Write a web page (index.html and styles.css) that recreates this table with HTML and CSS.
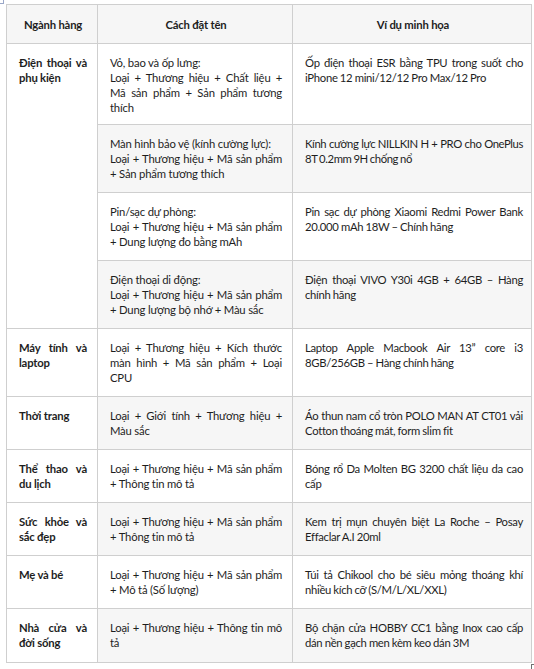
FILE: index.html
```html
<!DOCTYPE html>
<html lang="vi">
<head>
<meta charset="utf-8">
<link rel="stylesheet" href="styles.css">
</head>
<body>
<span class="mark-tl"></span>
<div class="wrap">
<table class="tbl">
<colgroup><col class="c1"><col class="c2"><col class="c3"></colgroup>
<thead>
<tr class="alt"><th>Ngành hàng</th><th>Cách đặt tên</th><th>Ví dụ minh họa</th></tr>
</thead>
<tbody>
<tr class="first"><td class="cat" rowspan="4">Điện thoại và phụ kiện</td><td>Vỏ, bao và ốp lưng:<br>Loại + Thương hiệu + Chất liệu + Mã sản phẩm + Sản phẩm tương thích</td><td class="ex">Ốp điện thoại ESR bằng TPU trong suốt cho iPhone 12 mini/12/12 Pro Max/12 Pro</td></tr>
<tr class="alt"><td>Màn hình bảo vệ (kính cường lực):<br>Loại + Thương hiệu + Mã sản phẩm + Sản phẩm tương thích</td><td class="ex tight">Kính cường lực NILLKIN H + PRO cho OnePlus 8T 0.2mm 9H chống nổ</td></tr>
<tr><td>Pin/sạc dự phòng:<br>Loại + Thương hiệu + Mã sản phẩm + Dung lượng đo bằng mAh</td><td class="ex">Pin sạc dự phòng Xiaomi Redmi Power Bank 20.000 mAh 18W – Chính hãng</td></tr>
<tr class="alt"><td>Điện thoại di động:<br>Loại + Thương hiệu + Mã sản phẩm + Dung lượng bộ nhớ + Màu sắc</td><td class="ex">Điện thoại VIVO Y30i 4GB + 64GB – Hàng chính hãng</td></tr>
<tr><td class="cat">Máy tính và laptop</td><td>Loại + Thương hiệu + Kích thước màn hình + Mã sản phẩm + Loại CPU</td><td class="ex">Laptop Apple Macbook Air 13” core i3 8GB/256GB – Hàng chính hãng</td></tr>
<tr class="alt"><td class="cat">Thời trang</td><td>Loại + Giới tính + Thương hiệu + Màu sắc</td><td class="ex">Áo thun nam cổ tròn POLO MAN AT CT01 vải Cotton thoáng mát, form slim fit</td></tr>
<tr><td class="cat">Thể thao và du lịch</td><td>Loại + Thương hiệu + Mã sản phẩm + Thông tin mô tả</td><td class="ex">Bóng rổ Da Molten BG 3200 chất liệu da cao cấp</td></tr>
<tr class="alt"><td class="cat">Sức khỏe và sắc đẹp</td><td>Loại + Thương hiệu + Mã sản phẩm + Thông tin mô tả</td><td class="ex">Kem trị mụn chuyên biệt La Roche – Posay Effaclar A.I 20ml</td></tr>
<tr><td class="cat">Mẹ và bé</td><td>Loại + Thương hiệu + Mã sản phẩm + Mô tả (Số lượng)</td><td class="ex">Túi tả Chikool cho bé siêu mỏng thoáng khí nhiều kích cỡ (S/M/L/XL/XXL)</td></tr>
<tr class="alt last"><td class="cat">Nhà cửa và đời sống</td><td>Loại + Thương hiệu + Thông tin mô tả</td><td class="ex">Bộ chặn cửa HOBBY CC1 bằng Inox cao cấp dán nền gạch men kèm keo dán 3M</td></tr>
</tbody>
</table>
</div>
<span class="mark-br"></span>
</body>
</html>
```

FILE: styles.css
```css
html, body {
  margin: 0;
  padding: 0;
  background: #ffffff;
}
body {
  position: relative;
  width: 534px;
  height: 669px;
  overflow: hidden;
  font-family: Lato, "Liberation Sans", sans-serif;
  font-size: 11.3px;
  letter-spacing: -0.2px;
  color: #1e1e1e;
}
.wrap {
  padding: 4px 0 0 6px;
}
.tbl {
  border-collapse: collapse;
  table-layout: fixed;
  width: 525px;
}
.c1 { width: 91px; }
.c2 { width: 195px; }
.c3 { width: 239px; }
.tbl th, .tbl td {
  border: 1px solid #cfcfcf;
  padding: 11px 10px 11px 12px;
  line-height: 15px;
  vertical-align: top;
}
.tbl th {
  text-align: center;
  font-weight: bold;
  padding: 12px 10px 11px 12px;
}
.tbl td {
  text-align: justify;
}
.tbl td.ex {
  padding-right: 8px;
  letter-spacing: -0.3px;
  word-spacing: -0.3px;
}
.tbl td.tight {
  letter-spacing: -0.4px;
  word-spacing: -0.5px;
}
.tbl td.cat {
  font-weight: bold;
  background: #ffffff;
}
.alt td, .alt th {
  background: #f6f6f6;
}
.first td {
  padding-bottom: 9px;
}
.last td {
  padding-bottom: 12px;
}
.mark-tl {
  position: absolute;
  left: 0;
  top: 0;
  width: 3px;
  height: 3px;
  border-right: 1px solid #9aa7c8;
  border-bottom: 1px solid #9aa7c8;
}
.mark-br {
  position: absolute;
  left: 531px;
  top: 664px;
  width: 4px;
  height: 6px;
  border-left: 1px solid #707070;
  border-top: 1px solid #707070;
}
```
